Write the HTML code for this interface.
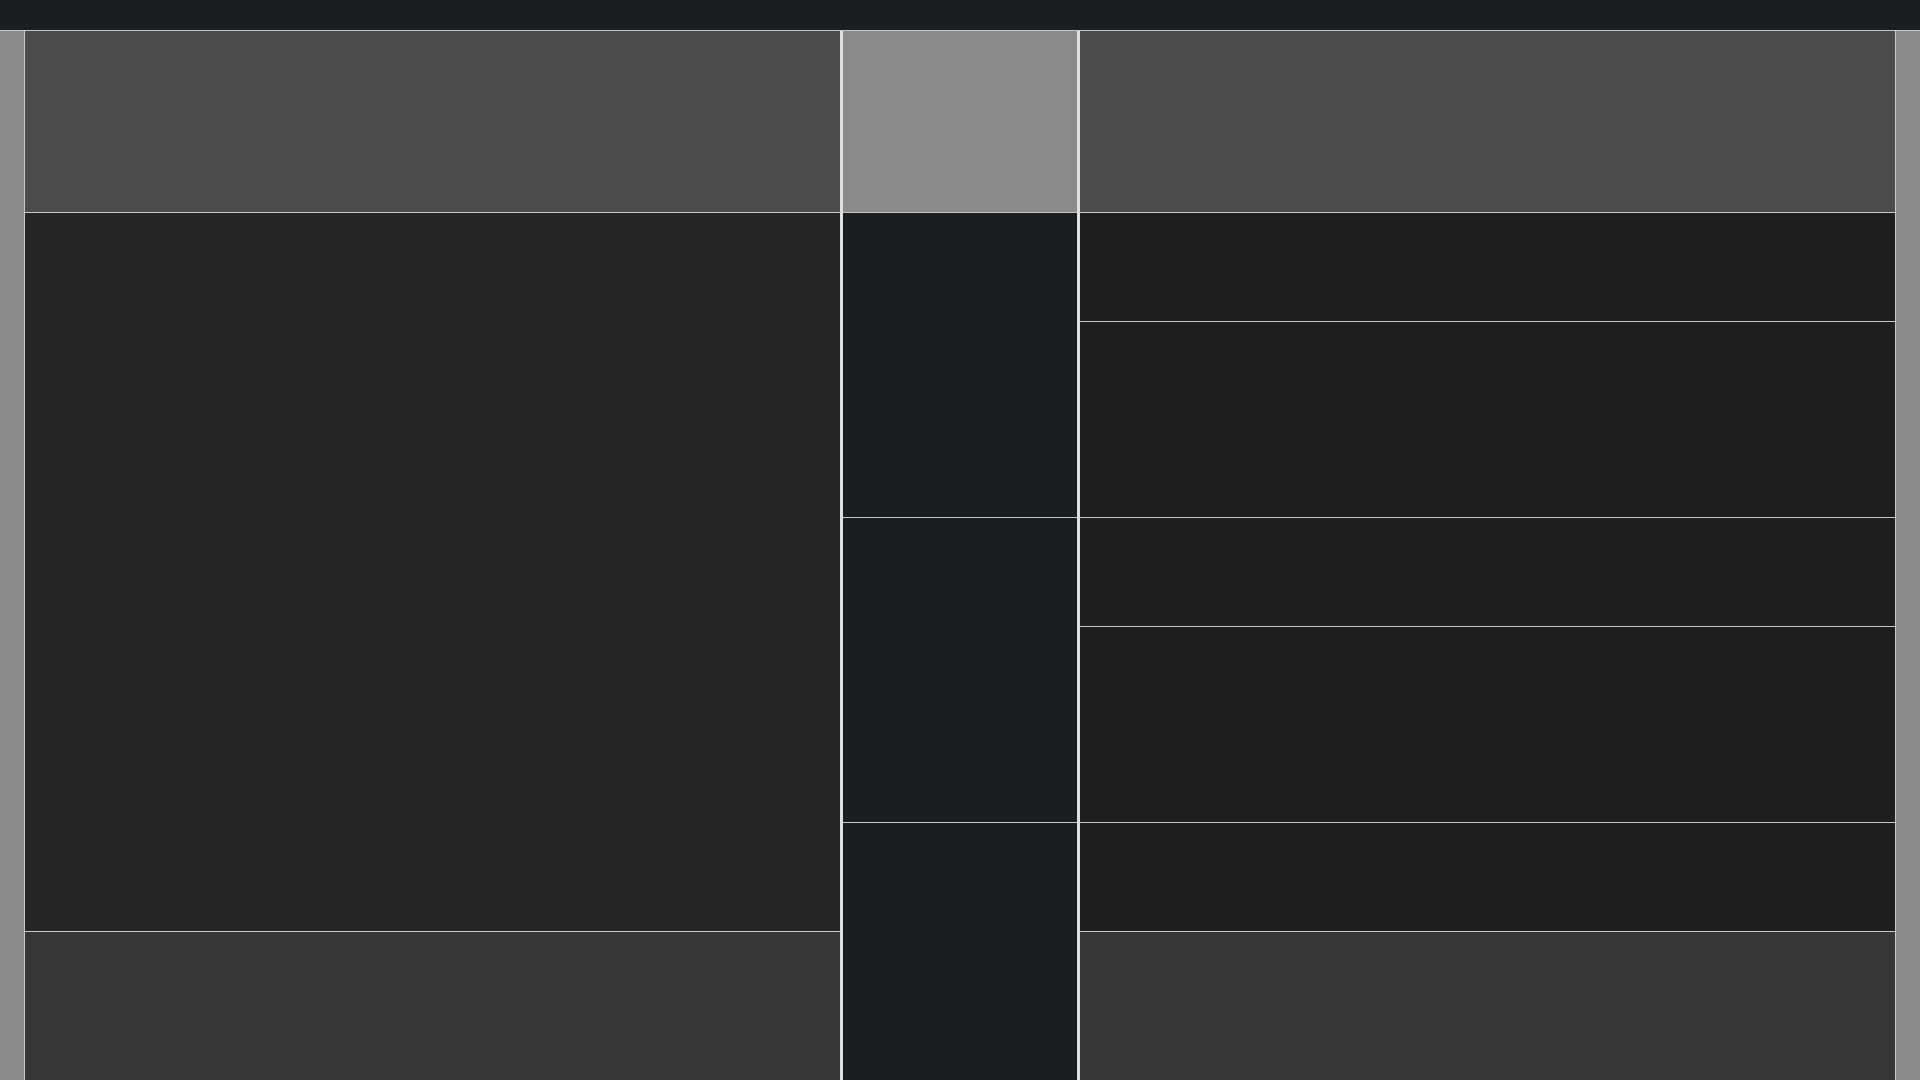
<!DOCTYPE html>
<html><head><style>
body{margin:0;width:1920px;height:1080px;background:#8a8a8a;position:relative;overflow:hidden}
div{position:absolute;box-sizing:border-box}
.l{background:#c8c8c8}
</style></head><body>
<div style="left:0;top:0;width:1920px;height:30px;background:#1c1d1f"></div>
<div class="l" style="left:0;top:30px;width:1920px;height:1px"></div>
<div class="l" style="left:24px;top:30px;width:1px;height:1050px"></div>
<div class="l" style="left:1895px;top:30px;width:1px;height:1050px"></div>
<!-- left panel -->
<div style="left:25px;top:31px;width:815px;height:181px;background:#4b4b4b"></div>
<div class="l" style="left:25px;top:212px;width:815px;height:1px"></div>
<div style="left:25px;top:213px;width:815px;height:718px;background:#262626"></div>
<div class="l" style="left:25px;top:931px;width:815px;height:1px"></div>
<div style="left:25px;top:932px;width:815px;height:148px;background:#363636"></div>
<!-- separators -->
<div style="left:840px;top:31px;width:3px;height:1049px;background:#e0e0e0"></div>
<div style="left:1077px;top:31px;width:3px;height:1049px;background:#e0e0e0"></div>
<!-- middle -->
<div style="left:843px;top:31px;width:234px;height:181px;background:#8a8a8a"></div>
<div class="l" style="left:843px;top:212px;width:234px;height:1px"></div>
<div style="left:843px;top:213px;width:234px;height:867px;background:#1c1d1f"></div>
<div class="l" style="left:843px;top:517px;width:234px;height:1px"></div>
<div class="l" style="left:843px;top:822px;width:234px;height:1px"></div>
<!-- right -->
<div style="left:1080px;top:31px;width:815px;height:181px;background:#4b4b4b"></div>
<div class="l" style="left:1080px;top:212px;width:815px;height:1px"></div>
<div style="left:1080px;top:213px;width:815px;height:718px;background:#1e1e1e"></div>
<div class="l" style="left:1080px;top:321px;width:815px;height:1px"></div>
<div class="l" style="left:1080px;top:517px;width:815px;height:1px"></div>
<div class="l" style="left:1080px;top:626px;width:815px;height:1px"></div>
<div class="l" style="left:1080px;top:822px;width:815px;height:1px"></div>
<div class="l" style="left:1080px;top:931px;width:815px;height:1px"></div>
<div style="left:1080px;top:932px;width:815px;height:148px;background:#363636"></div>
</body></html>
